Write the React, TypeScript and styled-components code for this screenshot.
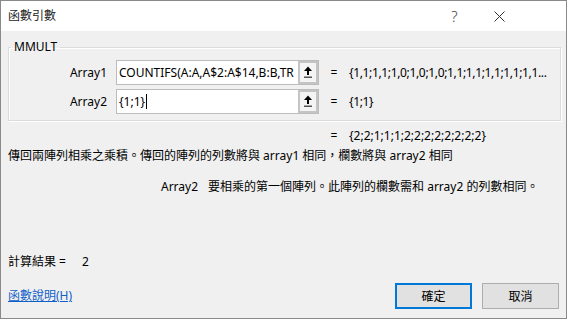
import React from "react";
import styled, { createGlobalStyle } from "styled-components";

const GlobalStyle = createGlobalStyle`
  html, body {
    margin: 0;
    padding: 0;
    background: #ffffff;
  }
  body {
    font-family: "Segoe UI", "Noto Sans", "Noto Sans CJK TC", sans-serif;
    font-size: 12px;
    color: #000;
  }
`;

const UI_FONT = `"Segoe UI", "Noto Sans", "Noto Sans CJK TC", sans-serif`;

const Dialog = styled.div`
  width: 567px;
  height: 319px;
  box-sizing: border-box;
  border: 1px solid #8a8a8a;
  background: #f0f0f0;
  display: flex;
  flex-direction: column;
  font-family: ${UI_FONT};
  font-size: 12px;
  line-height: 16px;
`;

const TitleBar = styled.div`
  height: 30px;
  flex: none;
  background: #ffffff;
  display: flex;
  align-items: center;
  padding-left: 7px;
`;

const TitleText = styled.div`
  flex: 1;
  font-size: 12px;
  color: #1a1a1a;
`;

const TitleButton = styled.div<{ $wide?: number }>`
  width: ${(p) => p.$wide ?? 45}px;
  height: 30px;
  display: flex;
  align-items: center;
  justify-content: center;
  color: #444;
  font-size: 15px;
  font-weight: 300;
`;

const Body = styled.div`
  flex: 1;
  display: flex;
  flex-direction: column;
  padding: 0 7px 9px 7px;
`;

const Group = styled.fieldset`
  margin: 8px 0 0 0;
  padding: 5px 0 6px 0;
  border: 1px solid #dcdcdc;
  box-shadow: inset 1px 1px 0 #ffffff, 1px 1px 0 #ffffff;
  width: 553px;
  box-sizing: border-box;
  display: flex;
  flex-direction: column;
  gap: 4px;
  min-width: 0;
`;

const Legend = styled.legend`
  margin-left: 2px;
  padding: 0 3px;
  font-size: 12px;
  line-height: 16px;
`;

const ArgRow = styled.div`
  display: grid;
  grid-template-columns: 99px 211px 30px minmax(0, 1fr);
  align-items: center;
  height: 25px;
`;

const ArgLabel = styled.div`
  text-align: right;
  padding-right: 1px;
`;

const InputBox = styled.div`
  margin-left: 8px;
  height: 25px;
  box-sizing: border-box;
  border: 1px solid #bcbcbc;
  background: #fff;
  display: flex;
  align-items: center;
  min-width: 0;
`;

const InputText = styled.div`
  flex: 1;
  min-width: 0;
  white-space: nowrap;
  overflow: hidden;
  padding-left: 2px;
  display: flex;
  align-items: center;
`;

const Caret = styled.span`
  display: inline-block;
  flex: none;
  width: 1px;
  height: 15px;
  background: #000;
  margin-left: 1px;
`;

const CollapseButton = styled.div`
  width: 20px;
  height: 23px;
  box-sizing: border-box;
  border: 2px solid #c4c4c4;
  background: #f4f4f4;
  display: flex;
  align-items: center;
  justify-content: center;
  flex: none;
`;

const Eq = styled.div`
  text-align: center;
`;

const Value = styled.div<{ $tight?: boolean }>`
  min-width: 0;
  white-space: nowrap;
  letter-spacing: ${(p) => (p.$tight ? "-0.35px" : "0")};
`;

const FormulaResult = styled.div`
  display: grid;
  grid-template-columns: 30px minmax(0, 1fr);
  margin: 7px 0 0 311px;
`;

const Description = styled.div`
  margin-top: 4px;
  white-space: nowrap;
`;

const ArgHelp = styled.div`
  margin: 15px 0 0 153px;
  display: flex;
  gap: 10px;
  white-space: nowrap;
`;

const ResultLine = styled.div`
  margin-top: auto;
  display: flex;
  gap: 16px;
`;

const Footer = styled.div`
  margin-top: 13px;
  height: 26px;
  display: flex;
  align-items: center;
`;

const HelpLink = styled.a`
  flex: 1;
  color: #1060c8;
  text-decoration: underline;
  cursor: pointer;
`;

const Button = styled.button<{ $primary?: boolean }>`
  width: 77px;
  height: 26px;
  margin-left: 10px;
  box-sizing: border-box;
  font-family: ${UI_FONT};
  font-size: 12px;
  color: #000;
  background: #e1e1e1;
  border: ${(p) => (p.$primary ? "2px solid #0078d7" : "1px solid #adadad")};
  padding: 0;
`;

const UpArrow = () => (
  <svg width="10" height="13" viewBox="0 0 10 13">
    <path d="M5 0.5 L9 5 L1 5 Z" fill="#000" />
    <rect x="4" y="4.5" width="2" height="4.5" fill="#000" />
    <rect x="1" y="10.5" width="8" height="1.5" fill="#555" />
  </svg>
);

const CloseIcon = () => (
  <svg width="11" height="11" viewBox="0 0 11 11">
    <path d="M0.5 0.5 L10.5 10.5 M10.5 0.5 L0.5 10.5" stroke="#333" strokeWidth="1" />
  </svg>
);

const args = [
  {
    name: "Array1",
    text: "COUNTIFS(A:A,A$2:A$14,B:B,TR",
    value: "{1,1;1,1;1,0;1,0;1,0;1,1;1,1;1,1;1,1;1,1...",
    focused: false,
  },
  { name: "Array2", text: "{1;1}", value: "{1;1}", focused: true },
];

export default function App() {
  return (
    <>
      <GlobalStyle />
      <Dialog>
        <TitleBar>
          <TitleText>函數引數</TitleText>
          <TitleButton>?</TitleButton>
          <TitleButton $wide={45}>
            <CloseIcon />
          </TitleButton>
          <TitleButton $wide={44} />
        </TitleBar>
        <Body>
          <Group>
            <Legend>MMULT</Legend>
            {args.map((a) => (
              <ArgRow key={a.name}>
                <ArgLabel>{a.name}</ArgLabel>
                <InputBox>
                  <InputText>
                    {a.text}
                    {a.focused && <Caret />}
                  </InputText>
                  <CollapseButton>
                    <UpArrow />
                  </CollapseButton>
                </InputBox>
                <Eq>=</Eq>
                <Value $tight>{a.value}</Value>
              </ArgRow>
            ))}
          </Group>
          <FormulaResult>
            <Eq>=</Eq>
            <Value>{"{2;2;1;1;1;2;2;2;2;2;2;2;2}"}</Value>
          </FormulaResult>
          <Description>
            傳回兩陣列相乘之乘積。傳回的陣列的列數將與 array1 相同，欄數將與 array2 相同
          </Description>
          <ArgHelp>
            <span>Array2</span>
            <span>要相乘的第一個陣列。此陣列的欄數需和 array2 的列數相同。</span>
          </ArgHelp>
          <ResultLine>
            <span>計算結果 =</span>
            <span>2</span>
          </ResultLine>
          <Footer>
            <HelpLink>函數說明(H)</HelpLink>
            <Button $primary>確定</Button>
            <Button>取消</Button>
          </Footer>
        </Body>
      </Dialog>
    </>
  );
}
